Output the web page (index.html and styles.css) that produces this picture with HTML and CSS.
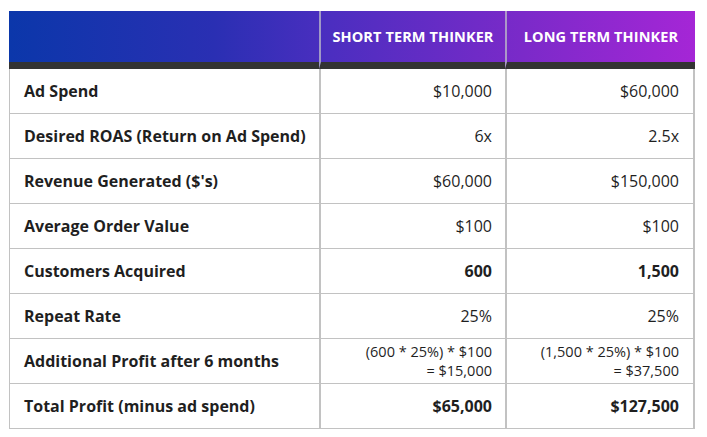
FILE: index.html
```html
<!DOCTYPE html>
<html>
<head>
<meta charset="utf-8">
<link rel="stylesheet" href="styles.css">
</head>
<body>
<table class="cmp">
  <thead>
    <tr>
      <th class="blank"></th>
      <th class="colh">SHORT TERM THINKER</th>
      <th class="colh">LONG TERM THINKER</th>
    </tr>
  </thead>
  <tbody>
    <tr><td class="lbl">Ad Spend</td><td class="val">$10,000</td><td class="val">$60,000</td></tr>
    <tr><td class="lbl">Desired ROAS (Return on Ad Spend)</td><td class="val">6x</td><td class="val">2.5x</td></tr>
    <tr><td class="lbl">Revenue Generated ($'s)</td><td class="val">$60,000</td><td class="val">$150,000</td></tr>
    <tr><td class="lbl">Average Order Value</td><td class="val">$100</td><td class="val">$100</td></tr>
    <tr><td class="lbl">Customers Acquired</td><td class="val strong">600</td><td class="val strong">1,500</td></tr>
    <tr><td class="lbl">Repeat Rate</td><td class="val">25%</td><td class="val">25%</td></tr>
    <tr><td class="lbl">Additional Profit after 6 months</td><td class="val two">(600 * 25%) * $100<br>= $15,000</td><td class="val two">(1,500 * 25%) * $100<br>= $37,500</td></tr>
    <tr><td class="lbl">Total Profit (minus ad spend)</td><td class="val strong">$65,000</td><td class="val strong">$127,500</td></tr>
  </tbody>
</table>
</body>
</html>
```
FILE: styles.css
```css
html, body {
  margin: 0;
  padding: 0;
  background: #ffffff;
}
body {
  padding: 11px 0 0 9px;
  font-family: "Open Sans", "Liberation Sans", sans-serif;
  color: #1f1f1f;
}
.cmp {
  border-collapse: separate;
  border-spacing: 0;
  width: 686px;
  table-layout: fixed;
}
.cmp thead tr {
  background: linear-gradient(90deg, #0b37aa 0%, #2a2fb3 30%, #4c2ec0 47%, #7b2ac9 75%, #a526d6 100%);
}
.cmp th {
  height: 58px;
  box-sizing: border-box;
  padding: 0;
  border-bottom: 7px solid #333333;
  color: #ffffff;
  font-size: 14.5px;
  font-weight: 700;
  letter-spacing: 0.1px;
  text-align: center;
}
.cmp th.blank { width: 310px; }
.cmp th.colh { border-left: 2px solid rgba(190, 190, 200, 0.75); }
.cmp th.colh:nth-child(2) { width: 186px; }
.cmp td {
  height: 45px;
  box-sizing: border-box;
  border-bottom: 1px solid #c2c2c2;
  font-size: 16px;
  vertical-align: middle;
}
.cmp td.lbl {
  border-left: 1px solid #c2c2c2;
  padding: 0 6px 1px 14px;
  font-weight: 700;
  white-space: nowrap;
}
.cmp td.val {
  border-left: 2px solid #c2c2c2;
  padding: 0 13px 1px 10px;
  text-align: right;
}
.cmp td.val:last-child {
  border-right: 2px solid #c2c2c2;
  padding-right: 14px;
}
.cmp td.strong { font-weight: 700; }
.cmp td.two {
  font-size: 14.5px;
  line-height: 19px;
}
```
